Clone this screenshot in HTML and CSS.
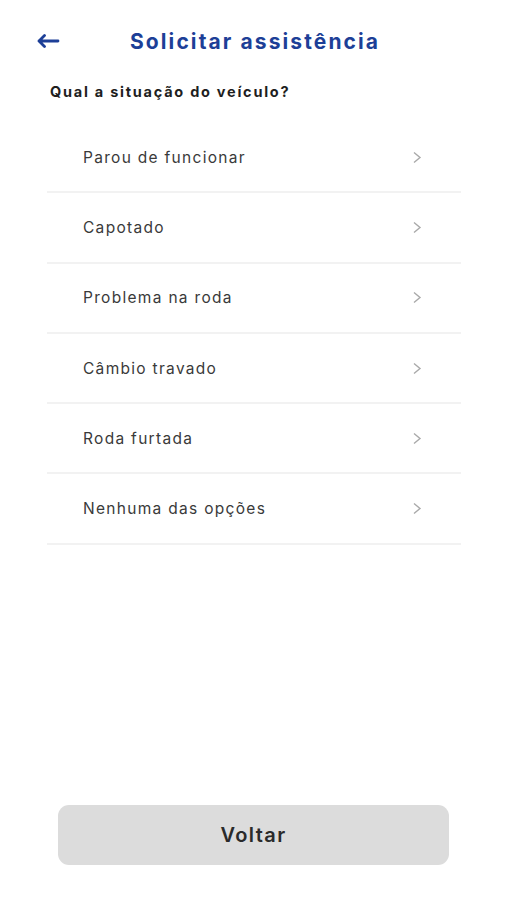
FILE: index.html
```html
<!DOCTYPE html>
<html lang="pt-BR">
<head>
<meta charset="utf-8">
<title>Solicitar assistência</title>
<link rel="stylesheet" href="styles.css">
</head>
<body>
<div class="screen">
  <header class="topbar">
    <button class="back" aria-label="Voltar">
      <svg width="24" height="14" viewBox="0 0 24 14" fill="none" stroke="#1d3f97" stroke-width="2.8" stroke-linecap="round" stroke-linejoin="round"><path d="M22 7H3M8.5 1.5L3 7l5.5 5.5"/></svg>
    </button>
    <h1 class="title">Solicitar assistência</h1>
  </header>
  <p class="question">Qual a situação do veículo?</p>
  <ul class="options">
    <li class="option"><span>Parou de funcionar</span><svg class="chev" width="10" height="13" viewBox="0 0 10 13" fill="none" stroke="#a9a9a9" stroke-width="1.4"><path d="M2 1.5l6 5-6 5"/></svg></li>
    <li class="option"><span>Capotado</span><svg class="chev" width="10" height="13" viewBox="0 0 10 13" fill="none" stroke="#a9a9a9" stroke-width="1.4"><path d="M2 1.5l6 5-6 5"/></svg></li>
    <li class="option"><span>Problema na roda</span><svg class="chev" width="10" height="13" viewBox="0 0 10 13" fill="none" stroke="#a9a9a9" stroke-width="1.4"><path d="M2 1.5l6 5-6 5"/></svg></li>
    <li class="option"><span>Câmbio travado</span><svg class="chev" width="10" height="13" viewBox="0 0 10 13" fill="none" stroke="#a9a9a9" stroke-width="1.4"><path d="M2 1.5l6 5-6 5"/></svg></li>
    <li class="option"><span>Roda furtada</span><svg class="chev" width="10" height="13" viewBox="0 0 10 13" fill="none" stroke="#a9a9a9" stroke-width="1.4"><path d="M2 1.5l6 5-6 5"/></svg></li>
    <li class="option"><span>Nenhuma das opções</span><svg class="chev" width="10" height="13" viewBox="0 0 10 13" fill="none" stroke="#a9a9a9" stroke-width="1.4"><path d="M2 1.5l6 5-6 5"/></svg></li>
  </ul>
  <div class="footer">
    <button class="btn-back">Voltar</button>
  </div>
</div>
</body>
</html>
```
FILE: styles.css
```css
* { box-sizing: border-box; }
html, body { margin: 0; padding: 0; background: #ffffff; }
body { font-family: "Inter", "Open Sans", "Noto Sans", sans-serif; color: #222; }
.screen {
  width: 507px;
  height: 900px;
  display: flex;
  flex-direction: column;
}
.topbar {
  display: flex;
  align-items: center;
  height: 40px;
  margin-top: 21px;
  padding-left: 36px;
}
.back {
  border: 0;
  background: none;
  padding: 0;
  width: 26px;
  height: 16px;
  display: flex;
  align-items: center;
  cursor: pointer;
}
.title {
  margin: 0 0 0 68px;
  font-size: 21px;
  font-weight: 700;
  color: #1d3f97;
  letter-spacing: 2.1px;
}
.question {
  margin: 22px 0 0 50px;
  font-size: 14.5px;
  font-weight: 700;
  color: #1e1e1e;
  letter-spacing: 1.75px;
}
.options {
  list-style: none;
  margin: 23px 46px 0 47px;
  padding: 0;
}
.option {
  height: 70.3px;
  display: flex;
  align-items: center;
  justify-content: space-between;
  padding: 0 39px 0 36px;
  border-bottom: 2px solid #f2f2f2;
  font-size: 15.5px;
  color: #3a3a3a;
  letter-spacing: 1.3px;
}
.chev { flex: none; }
.footer {
  margin-top: auto;
  padding: 0 58px 35px 58px;
}
.btn-back {
  width: 100%;
  height: 60px;
  border: 0;
  border-radius: 11px;
  background: #dcdcdc;
  font-family: inherit;
  font-size: 20px;
  font-weight: 600;
  color: #2a2a2a;
  letter-spacing: 1.4px;
}
```
